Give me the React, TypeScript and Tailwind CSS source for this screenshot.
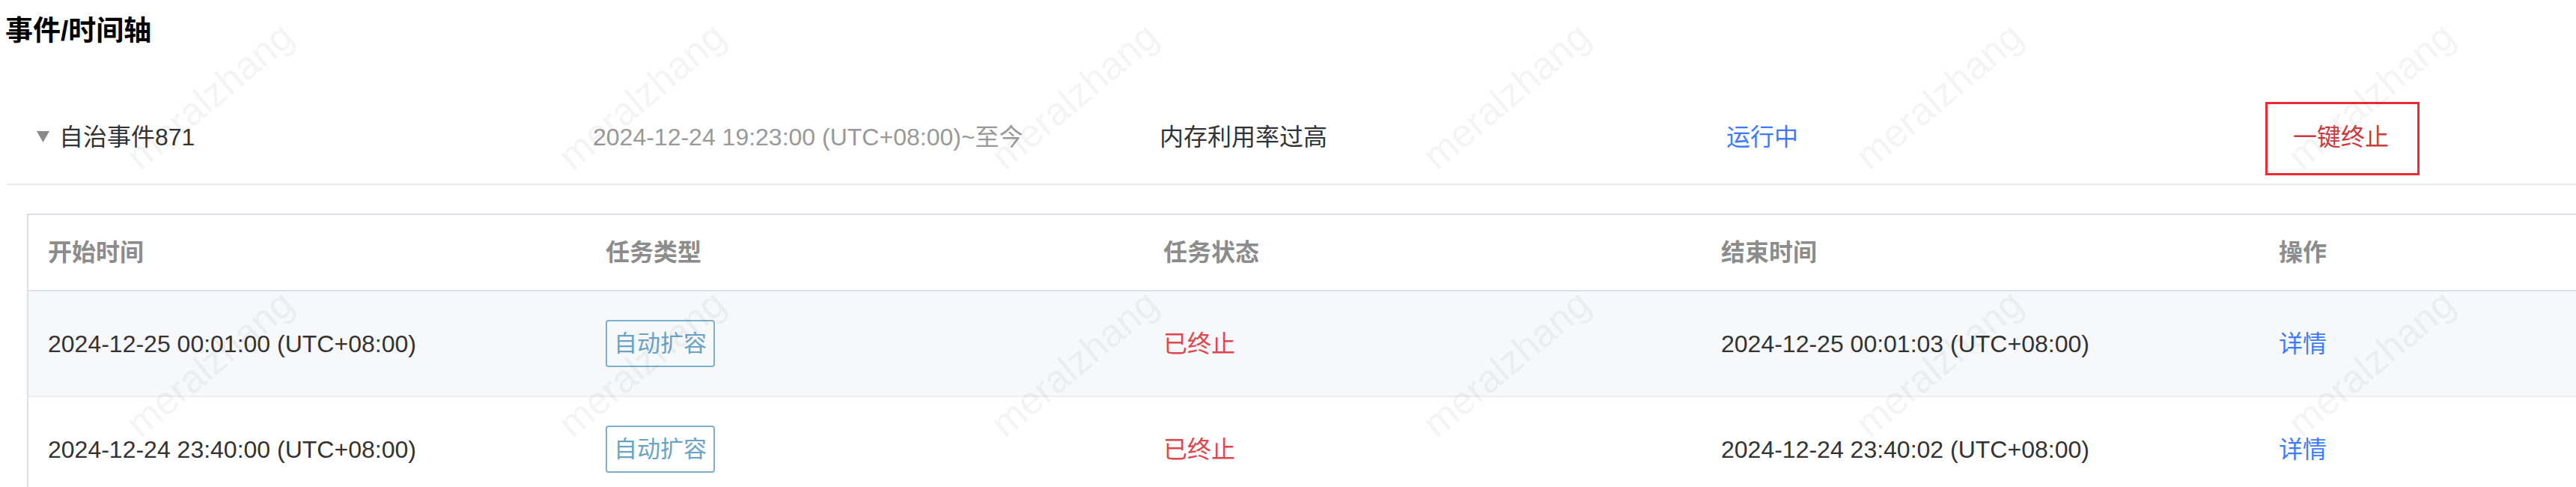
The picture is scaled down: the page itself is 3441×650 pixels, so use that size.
import React from "react";

const EVENT = {
  name: "自治事件871",
  time: "2024-12-24 19:23:00 (UTC+08:00)~至今",
  reason: "内存利用率过高",
  status: "运行中",
};

const TASKS = [
  {
    start: "2024-12-25 00:01:00 (UTC+08:00)",
    type: "自动扩容",
    status: "已终止",
    end: "2024-12-25 00:01:03 (UTC+08:00)",
  },
  {
    start: "2024-12-24 23:40:00 (UTC+08:00)",
    type: "自动扩容",
    status: "已终止",
    end: "2024-12-24 23:40:02 (UTC+08:00)",
  },
];

const HEADERS = ["开始时间", "任务类型", "任务状态", "结束时间", "操作"];

// watermark tiles: 6 across, 2 down
const MARKS = [128, 485].flatMap((y) =>
  [0, 1, 2, 3, 4, 5].map((k) => ({ x: 280 + 577.4 * k, y }))
);

function Caret() {
  return (
    <svg width="17" height="15" viewBox="0 0 17 15" className="shrink-0">
      <polygon points="0,0 17,0 8.5,15" fill="#8a8a8a" />
    </svg>
  );
}

export default function App() {
  return (
    <div className="relative h-[650px] w-full overflow-hidden bg-white font-['Liberation_Sans','Noto_Sans_CJK_SC',sans-serif] text-[#333]">
      {/* Title */}
      <div className="flex h-[83px] items-center pl-[7px] text-[37px] font-bold leading-none text-black">
        事件/时间轴
      </div>

      {/* Event summary row */}
      <div className="ml-[9px] mt-[37px] flex h-[127px] items-center border-b-2 border-[#e8eaef] text-[32px] leading-none">
        <div className="flex w-[783px] shrink-0 items-center gap-[13px] pl-[40px]">
          <Caret />
          <span>{EVENT.name}</span>
        </div>
        <div className="w-[757px] shrink-0 text-[#999]">{EVENT.time}</div>
        <div className="w-[757px] shrink-0">{EVENT.reason}</div>
        <div className="w-[757px] shrink-0 text-[#3d7bff]">{EVENT.status}</div>
        <div className="shrink-0">
          <span className="relative text-[#cf3a3f]">
            一键终止
            <span className="pointer-events-none absolute -bottom-[33px] -left-[37px] -right-[41px] -top-[29px] border-[3px] border-[#ee2b34]" />
          </span>
        </div>
      </div>

      {/* Task table */}
      <div className="ml-[36px] mt-[38px] w-max border-l-2 border-t-2 border-[#dde0e6] text-[32px] leading-none">
        <div className="grid h-[102px] grid-cols-[745px_745px_745px_745px_745px] items-center border-b-2 border-[#dde0e6] font-bold text-[#8c8c8c]">
          {HEADERS.map((h) => (
            <div key={h} className="pl-[26px]">
              {h}
            </div>
          ))}
        </div>
        {TASKS.map((t, i) => (
          <div
            key={t.start}
            className={`grid h-[141px] grid-cols-[745px_745px_745px_745px_745px] items-center border-b-2 border-[#eceef1] ${
              i === 0 ? "bg-[#f7f8fa]" : "bg-white"
            }`}
          >
            <div className="pl-[26px]">{t.start}</div>
            <div className="pl-[26px]">
              <span className="inline-flex h-[63px] items-center rounded-[4px] border-2 border-[#7eafd0] px-[9px] text-[31px] text-[#6aa3c8]">
                {t.type}
              </span>
            </div>
            <div className="pl-[26px] text-[#e0474c]">{t.status}</div>
            <div className="pl-[26px]">{t.end}</div>
            <div className="pl-[26px] text-[#3d7bff]">详情</div>
          </div>
        ))}
      </div>

      {/* Watermark overlay */}
      {MARKS.map((m, i) => (
        <span
          key={i}
          className="pointer-events-none absolute -translate-x-1/2 -translate-y-1/2 -rotate-40 whitespace-nowrap text-[52px] leading-none text-black/[0.045]"
          style={{ left: m.x, top: m.y }}
        >
          meralzhang
        </span>
      ))}
    </div>
  );
}
